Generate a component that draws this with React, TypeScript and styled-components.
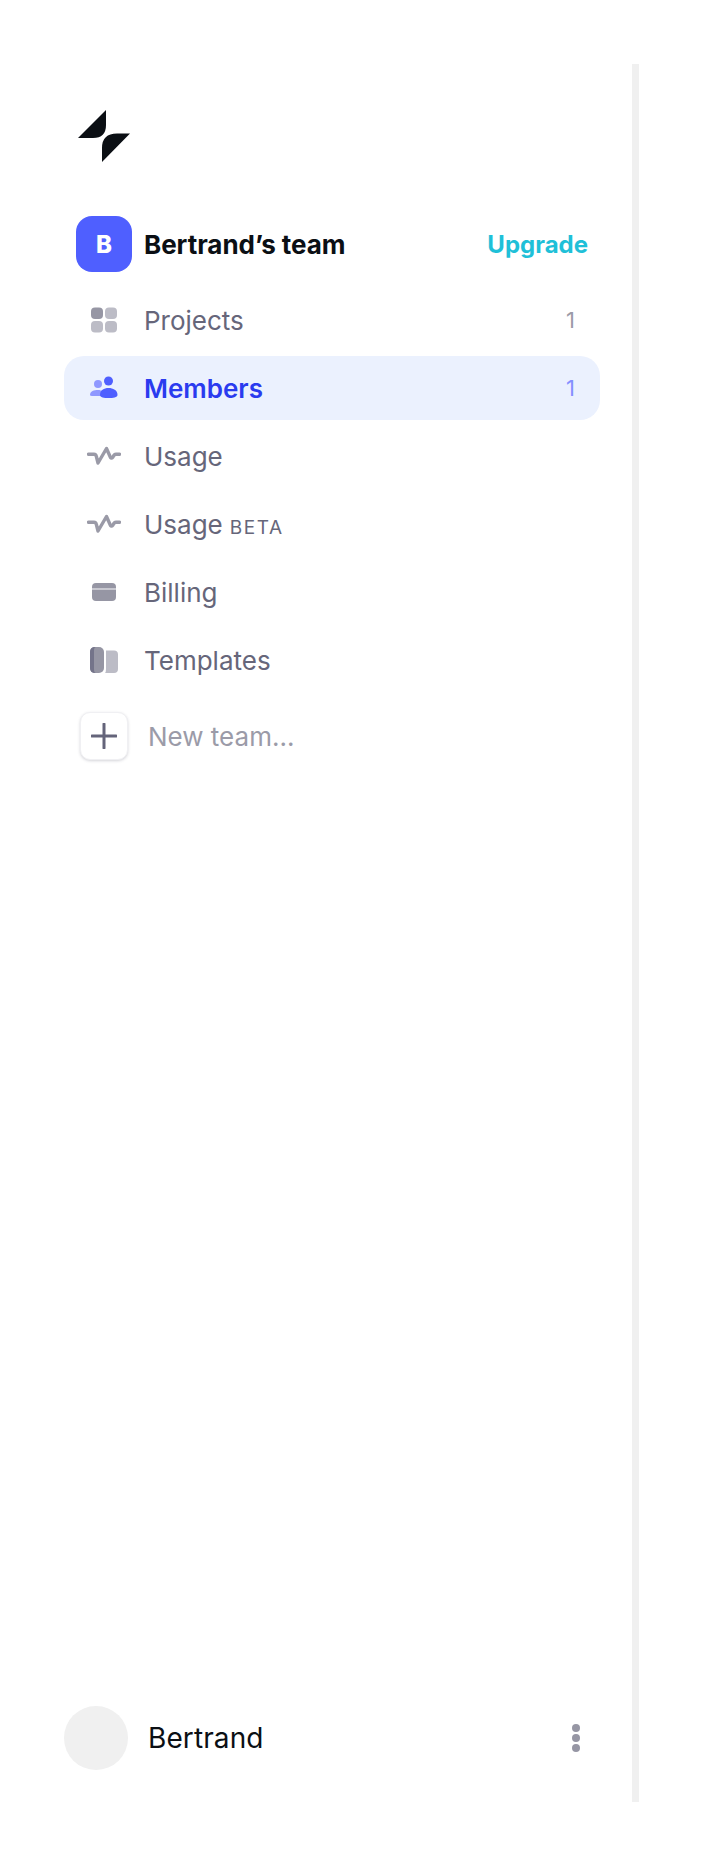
import * as React from 'react';
import styled, { createGlobalStyle } from 'styled-components';

const GlobalStyle = createGlobalStyle`
    html, body {
        margin: 0;
        padding: 0;
        background: #fff;
    }
`;

const Page = styled.div`
    box-sizing: border-box;
    width: 703px;
    height: 1866px;
    padding: 64px 64px;
    font-family: Inter, "Noto Sans", sans-serif;
`;

const Sidebar = styled.aside`
    box-sizing: border-box;
    width: 575px;
    height: 1738px;
    padding: 46px 32px 32px 0;
    border-right: 7px solid #f0f0f0;
    display: flex;
    flex-direction: column;
`;

const LogoBox = styled.div`
    height: 52px;
    padding-left: 14px;
    margin-bottom: 54px;
`;

const TeamHeader = styled.div`
    display: flex;
    align-items: center;
    height: 56px;
    padding: 0 12px;
    margin-bottom: 16px;
`;

const TeamAvatar = styled.div`
    width: 56px;
    height: 56px;
    border-radius: 16px;
    background: #4f5fff;
    color: #fff;
    font-size: 24px;
    font-weight: 800;
    display: flex;
    align-items: center;
    justify-content: center;
    flex-shrink: 0;
`;

const TeamName = styled.div`
    margin-left: 12px;
    flex: 1;
    font-size: 26px;
    font-weight: 700;
    letter-spacing: -0.04px;
    color: #0b0f14;
`;

const UpgradeLink = styled.a`
    font-size: 24px;
    font-weight: 700;
    color: #1fc0d8;
`;

const NavList = styled.nav`
    display: flex;
    flex-direction: column;
    gap: 4px;
`;

const NavRow = styled.div<{ $active?: boolean }>`
    display: flex;
    align-items: center;
    height: 64px;
    padding: 0 25px 0 12px;
    border-radius: 20px;
    background: ${p => (p.$active ? '#ebf1fe' : 'transparent')};
    color: ${p => (p.$active ? '#2a3bef' : '#66667a')};
    font-size: 26px;
    font-weight: ${p => (p.$active ? 600 : 400)};
`;

const IconSlot = styled.span`
    width: 56px;
    height: 56px;
    display: flex;
    align-items: center;
    justify-content: center;
    flex-shrink: 0;
`;

const NavLabel = styled.span`
    margin-left: 12px;
    flex: 1;
`;

const BetaTag = styled.span`
    font-size: 19px;
    letter-spacing: 1.6px;
    margin-left: 7px;
`;

const Count = styled.span<{ $active?: boolean }>`
    font-size: 22px;
    font-weight: 400;
    color: ${p => (p.$active ? '#8490ff' : '#9b9ba8')};
`;

const NewTeamRow = styled.div`
    display: flex;
    align-items: center;
    height: 48px;
    margin-top: 20px;
    padding-left: 16px;
    font-size: 26px;
    color: #9b9ba8;
`;

const PlusBox = styled.div`
    box-sizing: border-box;
    width: 48px;
    height: 48px;
    margin-right: 20px;
    border-radius: 10px;
    border: 1px solid #f0f0f3;
    background: #fff;
    box-shadow: 0 1px 3px rgba(60, 60, 80, 0.22);
    display: flex;
    align-items: center;
    justify-content: center;
`;

const Footer = styled.div`
    margin-top: auto;
    display: flex;
    align-items: center;
    height: 64px;
    padding-right: 20px;
`;

const UserAvatar = styled.div`
    width: 64px;
    height: 64px;
    border-radius: 50%;
    background: #f0f0f0;
`;

const UserName = styled.div`
    margin-left: 20px;
    flex: 1;
    font-size: 28px;
    letter-spacing: 0.1px;
    color: #0b0f14;
`;

const Logo = () => (
    <svg width="52" height="52" viewBox="0 0 52 52">
        <path d="M0 28 L28 0 V15 Q28 28 15 28 Z M24 52 L52 23.500 H39 Q24 23.500 24 38 Z" fill="#0b0f14" />
    </svg>
);

const ProjectsIcon = () => (
    <svg width="28" height="26" viewBox="0 0 28 26">
        <rect x="1" y="0.500" width="12" height="11.500" rx="4" fill="#9696a4" />
        <rect x="15" y="0.500" width="12" height="11.500" rx="4" fill="#bcbcc6" />
        <rect x="1" y="14" width="12" height="11.500" rx="4" fill="#bcbcc6" />
        <rect x="15" y="14" width="12" height="11.500" rx="4" fill="#bcbcc6" />
    </svg>
);

const MembersIcon = () => (
    <svg width="28" height="24" viewBox="0 0 28 24">
        <circle cx="8" cy="8" r="4" fill="#8f98ff" />
        <path d="M0 19 C0 15 4 14 8 14 C12 14 14 16 14 20 H2 Q0 20 0 19 Z" fill="#8f98ff" />
        <circle cx="18.500" cy="5" r="4.500" fill="#4f5fff" />
        <path d="M10 19 C10 14 14 12 18.500 12 C23 12 27.500 14 27.500 19 C27.500 21.500 23 22 18.500 22 C14 22 10 21.500 10 19 Z" fill="#4f5fff" />
    </svg>
);

const UsageIcon = () => (
    <svg width="34" height="20" viewBox="0 0 34 20" fill="none">
        <path d="M1.500 8.300 H7 Q9 8.300 9.500 11 L11 17 L19.500 2.500 L23.500 11.500 Q24.500 13 26 11 Q27 8.300 29 8.300 H32.500" stroke="#9a9aa7" strokeWidth="3.400" strokeLinecap="round" strokeLinejoin="round" />
    </svg>
);

const BillingIcon = () => (
    <svg width="24" height="18" viewBox="0 0 24 18">
        <rect x="0" y="0" width="24" height="18" rx="4" fill="#9696a4" />
        <rect x="0" y="5" width="24" height="2" fill="#c8c8d0" />
    </svg>
);

const TemplatesIcon = () => (
    <svg width="28" height="26" viewBox="0 0 28 26">
        <path d="M16 3.500 H24 Q28 3.500 28 7.500 V22 Q28 26 24 26 H15 Q16 25 16 22 Z" fill="#bcbcc6" />
        <rect x="0" y="0" width="14" height="26" rx="5" fill="#9696a4" />
        <path d="M5 0 Q0 0 0 5 V21 Q0 26 5 26 H6 Q4 26 4 22 V4 Q4 0 6 0 Z" fill="#74748a" />
    </svg>
);

const PlusIcon = () => (
    <svg width="26" height="26" viewBox="0 0 26 26">
        <path d="M13 1 V25 M1 13 H25" stroke="#64647a" strokeWidth="3" strokeLinecap="round" />
    </svg>
);

const DotsIcon = () => (
    <svg width="8" height="28" viewBox="0 0 8 28">
        <circle cx="4" cy="4" r="4" fill="#9696a4" />
        <circle cx="4" cy="14" r="4" fill="#9696a4" />
        <circle cx="4" cy="24" r="4" fill="#9696a4" />
    </svg>
);

export default function App(): React.JSX.Element {
    return (
        <Page>
            <GlobalStyle />
            <Sidebar>
                <LogoBox>
                    <Logo />
                </LogoBox>
                <TeamHeader>
                    <TeamAvatar>B</TeamAvatar>
                    <TeamName>Bertrand’s team</TeamName>
                    <UpgradeLink>Upgrade</UpgradeLink>
                </TeamHeader>
                <NavList>
                    <NavRow>
                        <IconSlot><ProjectsIcon /></IconSlot>
                        <NavLabel>Projects</NavLabel>
                        <Count>1</Count>
                    </NavRow>
                    <NavRow $active>
                        <IconSlot><MembersIcon /></IconSlot>
                        <NavLabel>Members</NavLabel>
                        <Count $active>1</Count>
                    </NavRow>
                    <NavRow>
                        <IconSlot><UsageIcon /></IconSlot>
                        <NavLabel>Usage</NavLabel>
                    </NavRow>
                    <NavRow>
                        <IconSlot><UsageIcon /></IconSlot>
                        <NavLabel>Usage<BetaTag>BETA</BetaTag></NavLabel>
                    </NavRow>
                    <NavRow>
                        <IconSlot><BillingIcon /></IconSlot>
                        <NavLabel>Billing</NavLabel>
                    </NavRow>
                    <NavRow>
                        <IconSlot><TemplatesIcon /></IconSlot>
                        <NavLabel>Templates</NavLabel>
                    </NavRow>
                </NavList>
                <NewTeamRow>
                    <PlusBox><PlusIcon /></PlusBox>
                    New team...
                </NewTeamRow>
                <Footer>
                    <UserAvatar />
                    <UserName>Bertrand</UserName>
                    <DotsIcon />
                </Footer>
            </Sidebar>
        </Page>
    );
}
